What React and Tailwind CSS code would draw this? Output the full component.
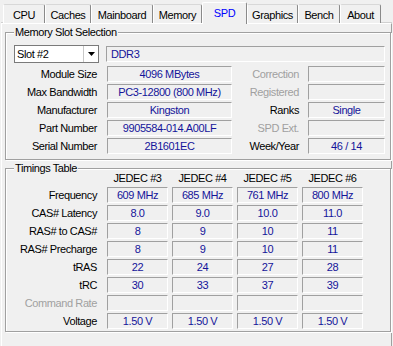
import React from "react";

const FONT = { fontFamily: '"Liberation Sans", Arial, sans-serif' };

const tabs = [
  { name: "CPU", w: "w-[42px]" },
  { name: "Caches", w: "w-[46px]" },
  { name: "Mainboard", w: "w-[62px]" },
  { name: "Memory", w: "w-[49px]" },
  { name: "SPD", w: "w-[45px]", active: true },
  { name: "Graphics", w: "w-[51px]" },
  { name: "Bench", w: "w-[42px]" },
  { name: "About", w: "w-[41px]" },
];

function Field({ w, children, left }) {
  return (
    <div
      className={`${w} h-[16px] shrink-0 border border-t-[#a0a0a0] border-l-[#a0a0a0] border-r-white border-b-white flex items-center ${
        left ? "justify-start pl-[4px]" : "justify-center"
      } text-[#14149a] leading-none whitespace-nowrap`}
    >
      {children}
    </div>
  );
}

function Label({ w, children, disabled }) {
  return (
    <div
      className={`${w} shrink-0 text-right leading-none whitespace-nowrap ${
        disabled ? "text-[#a0a0a0]" : "text-black"
      }`}
    >
      {children}
    </div>
  );
}

function Group({ title, children, className }) {
  return (
    <div
      className={`relative ml-[3px] w-[386px] border border-[#a0a0a0] shadow-[inset_1px_1px_0_#fff,1px_1px_0_#fff] ${className}`}
    >
      <div className="absolute left-[8px] -top-[8px] bg-[#f0f0f0] px-[1px] leading-[14px] text-black">
        {title}
      </div>
      {children}
    </div>
  );
}

const infoRows = [
  ["Module Size", "4096 MBytes", "Correction", "", true],
  ["Max Bandwidth", "PC3-12800 (800 MHz)", "Registered", "", true],
  ["Manufacturer", "Kingston", "Ranks", "Single", false],
  ["Part Number", "9905584-014.A00LF", "SPD Ext.", "", true],
  ["Serial Number", "2B1601EC", "Week/Year", "46 / 14", false],
];

const timingRows = [
  ["Frequency", ["609 MHz", "685 MHz", "761 MHz", "800 MHz"]],
  ["CAS# Latency", ["8.0", "9.0", "10.0", "11.0"]],
  ["RAS# to CAS#", ["8", "9", "10", "11"]],
  ["RAS# Precharge", ["8", "9", "10", "11"]],
  ["tRAS", ["22", "24", "27", "28"]],
  ["tRC", ["30", "33", "37", "39"]],
  ["Command Rate", ["", "", "", ""], true],
  ["Voltage", ["1.50 V", "1.50 V", "1.50 V", "1.50 V"]],
];

export default function App() {
  return (
    <div
      style={FONT}
      className="w-[393px] h-[346px] overflow-hidden bg-[#f0f0f0] text-[11px] tracking-[-0.4px] text-black"
    >
      {/* Tabs */}
      <div className="relative z-10 flex items-end h-[23px] pl-[3px]">
        {tabs.map((t) =>
          t.active ? (
            <div
              key={t.name}
              className={`${t.w} h-[22px] -mb-px flex justify-center pt-[3px] bg-[#f0f0f0] border-t border-l border-r border-t-white border-l-white border-r-[#8a8a8a] rounded-t-[2px] text-[#0000ff] leading-[14px]`}
            >
              {t.name}
            </div>
          ) : (
            <div
              key={t.name}
              className={`${t.w} h-[19px] flex justify-center pt-[3px] bg-[#f0f0f0] border-t border-l border-r border-t-[#d8d8d8] border-l-white border-r-[#8a8a8a] rounded-t-[2px] leading-[14px]`}
            >
              {t.name}
            </div>
          )
        )}
      </div>

      {/* Panel */}
      <div className="ml-[1px] w-[391px] h-[323px] border-t border-l border-r border-t-white border-l-white border-r-[#a0a0a0] shadow-[0_-1px_0_#d0d0d0]">
        <div className="h-[8px]" />
        {/* Memory Slot Selection */}
        <Group title="Memory Slot Selection" className="h-[128px]">
          <div className="pt-[12px] flex flex-col">
            <div className="flex items-center h-[18px]">
              <div className="ml-[8px] w-[85px] h-[18px] flex bg-white border border-[#7a7a7a]">
                <div className="flex-1 flex items-center pl-[2px] leading-none">Slot #2</div>
                <div className="w-[15px] flex items-center justify-center border-l border-[#c8c8c8]">
                  <svg width="7" height="4" viewBox="0 0 7 4">
                    <polygon points="0,0 7,0 3.5,4" fill="#000" />
                  </svg>
                </div>
              </div>
              <div className="ml-[7px]">
                <Field w="w-[279px]" left>
                  DDR3
                </Field>
              </div>
            </div>
            <div className="mt-[3px] flex flex-col gap-[2px]">
              {infoRows.map(([l, v, l2, v2, dis]) => (
                <div key={l} className="flex items-center h-[16px]">
                  <Label w="w-[91px]">{l}</Label>
                  <div className="ml-[10px]">
                    <Field w="w-[125px]">{v}</Field>
                  </div>
                  <Label w="w-[67px]" disabled={dis}>
                    {l2}
                  </Label>
                  <div className="ml-[9px]">
                    <Field w="w-[77px]">{v2}</Field>
                  </div>
                </div>
              ))}
            </div>
          </div>
        </Group>

        <div className="h-[8px]" />

        {/* Timings Table */}
        <Group title="Timings Table" className="h-[164px]">
          <div className="pt-[1px] flex flex-col">
            <div className="flex items-center h-[16px]">
              <div className="w-[101px] shrink-0" />
              <div className="flex gap-[4px]">
                {["JEDEC #3", "JEDEC #4", "JEDEC #5", "JEDEC #6"].map((h) => (
                  <div key={h} className="w-[61px] text-center leading-none">
                    {h}
                  </div>
                ))}
              </div>
            </div>
            <div className="mt-[1px] flex flex-col gap-[2px]">
              {timingRows.map(([l, vals, dis]) => (
                <div key={l} className="flex items-center h-[16px]">
                  <Label w="w-[91px]" disabled={dis}>
                    {l}
                  </Label>
                  <div className="ml-[10px] flex gap-[4px]">
                    {vals.map((v, i) => (
                      <Field key={i} w="w-[61px]">
                        {v}
                      </Field>
                    ))}
                  </div>
                </div>
              ))}
            </div>
          </div>
        </Group>
      </div>
    </div>
  );
}
